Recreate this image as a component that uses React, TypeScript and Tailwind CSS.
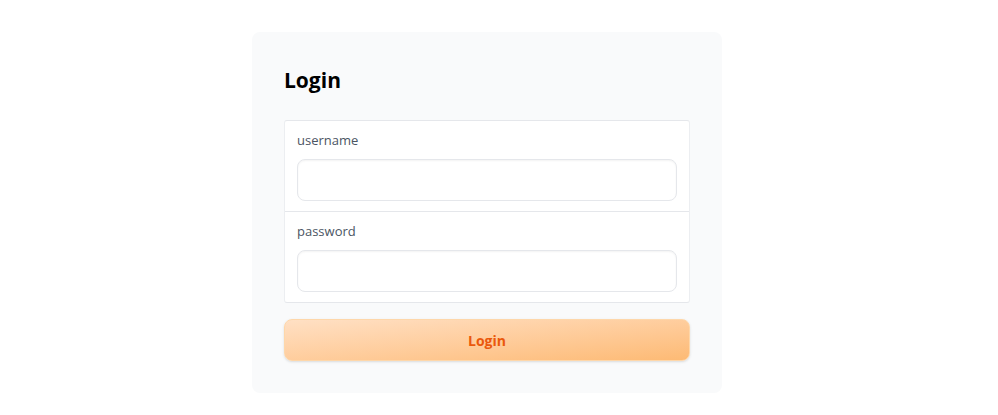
export default function App() {
  const fields = [
    { label: "username", type: "text" },
    { label: "password", type: "password" },
  ];

  return (
    <div
      className="min-h-[415px] bg-white pt-8 pl-[252px]"
      style={{ fontFamily: '"Open Sans", "Noto Sans", sans-serif' }}
    >
      <div className="w-[470px] rounded-lg bg-[#f9fafb] p-8">
        <h1 className="mb-6 text-[21px] font-bold leading-8 text-black">Login</h1>

        <div className="rounded-[3px] border border-[#e5e7eb] border-x-[#eceef1] bg-white">
          {fields.map((field, index) => (
            <div
              key={index}
              className={
                index > 0
                  ? "border-t border-[#e5e7eb] px-3 pt-[9px] pb-[10px]"
                  : "px-3 pt-[9px] pb-[10px]"
              }
            >
              <label className="mb-[9px] block text-[13px] leading-5 text-[#4b5563]">
                {field.label}
              </label>
              <input
                type={field.type}
                className="block h-[42px] w-full rounded-lg border border-[#e5e7eb] bg-white px-3 shadow-[inset_0_1px_2px_rgba(0,0,0,0.05)] outline-none"
              />
            </div>
          ))}
        </div>

        <button className="mt-4 h-[42px] w-full rounded-lg border border-[#fed7aa] bg-gradient-to-br from-[#ffe0c4] to-[#fdba74] text-[14px] font-bold text-[#ea580c] shadow-sm">
          Login
        </button>
      </div>
    </div>
  );
}
